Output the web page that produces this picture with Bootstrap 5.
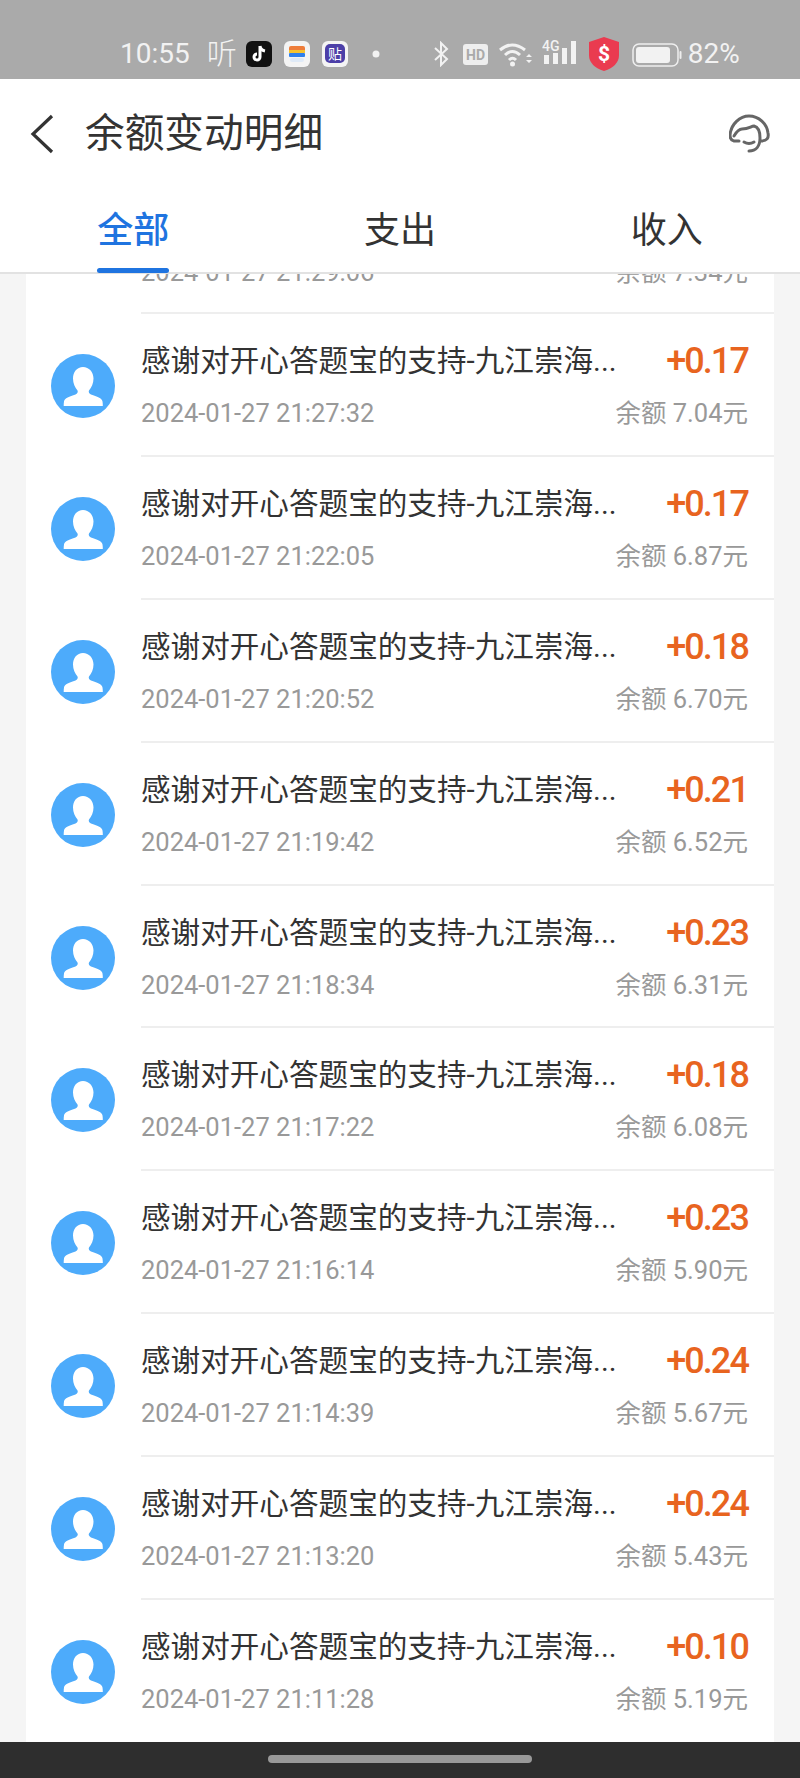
<!DOCTYPE html>
<html>
<head>
    <title>余额变动明细</title>
    <meta charset="UTF-8">
    <link href="https://cdn.jsdelivr.net/npm/bootstrap@5.3.0/dist/css/bootstrap.min.css" rel="stylesheet">
    <style>
        body { background: #f5f5f5; overflow: hidden; font-family: Roboto, "Noto Sans CJK SC", sans-serif; color: #333; }
        .status-bar { height: 79px; background: #aaa; color: #f2f2f2; padding: 24px 0 0 120px; font-size: 28px; line-height: 60px; }
        .status-bar svg { display: block; flex: none; }
        .st-listen { width: 27px; margin-left: 17px; font-size: 30px; font-weight: 200; letter-spacing: -3px; white-space: nowrap; }
        .top-head { height: 195px; background: #fff; border-bottom: 2px solid #e2e2e2; position: relative; z-index: 2; }
        .title-row { height: 109px; padding: 0 29px 0 30px; }
        .page-title { font-size: 39.700px; margin-left: 31px; line-height: 1; font-weight: 400; color: #333; }
        .tab-item { font-size: 36px; line-height: 1; padding-top: 25px; height: 84px; color: #333; text-align: center; position: relative; }
        .tab-item.on { color: #1f74e0; font-weight: 500; }
        .tab-item.on::after { content: ""; position: absolute; left: 50%; margin-left: -36px; bottom: -1px; width: 72px; height: 5px; border-radius: 3px; background: #1f74e0; }
        .bill-list { flex: 1; margin: 0 26px; background: #fff; overflow: hidden; }
        .bill-row { height: 142.9px; display: flex; }
        .bill-row.part { height: 38px; justify-content: flex-end; flex-direction: column; margin-left: 115px; }
        .part .bill-sub { margin: 0 26px 22px 0; height: 36px; flex: none; }
        .avatar-slot { width: 115px; flex: none; padding: 42px 0 0 25px; }
        .bill-body { flex: 1; min-width: 0; border-top: 2px solid #eee; padding: 27px 26px 0 0; }
        .bill-main { display: flex; justify-content: space-between; height: 40px; align-items: center; }
        .bill-name { font-size: 29.600px; line-height: 40px; color: #333; width: 476px; white-space: nowrap; overflow: hidden; }
        .bill-money { font-size: 36px; font-weight: 500; letter-spacing: -1.9px; color: #e8641f; line-height: 40px; }
        .bill-sub { display: flex; justify-content: space-between; margin-top: 14px; font-size: 25.5px; line-height: 36px; color: #999; }
        .bottom-nav { height: 36px; background: #2e2e2e; padding-top: 13px; }
        .nav-handle { width: 264px; height: 8px; border-radius: 4px; background: #999; margin: 0 auto; }
    </style>
</head>
<body class="d-flex flex-column vh-100">
    <!-- status bar -->
    <div class="status-bar d-flex align-items-start">
        <span>10:55</span>
        <span class="st-listen">听</span>
        <svg style="margin:17px 0 0 12px" width="26" height="26" viewBox="0 0 26 26"><rect width="26" height="26" rx="6" fill="#111"/><path d="M14 5v11a3 3 0 1 1-3-3M14 5c.5 3 2.500 4.500 5 5" fill="none" stroke="#fff" stroke-width="3"/></svg>
        <svg style="margin:17px 0 0 12px" width="26" height="26" viewBox="0 0 26 26"><rect width="26" height="26" rx="6" fill="#f4f4f4"/><path d="M5 7q0-2 2-2h12q2 0 2 2v2H5z" fill="#ee7d3a"/><rect x="5" y="9" width="16" height="3" fill="#f7c32e"/><rect x="5" y="12" width="16" height="4" rx="1" fill="#2f80ed"/><rect x="6" y="17" width="14" height="4" rx="2" fill="#dfeaf7"/></svg>
        <svg style="margin:17px 0 0 12px" width="26" height="26" viewBox="0 0 26 26"><rect width="26" height="26" rx="6" fill="#f4f4f4"/><rect x="3" y="3" width="20" height="19" rx="5" fill="#4c3fa8"/><text x="13" y="18" text-anchor="middle" font-size="14" fill="#fff" font-family="Noto Sans CJK SC">贴</text></svg>
        <svg style="margin:26px 0 0 24px" width="8" height="8"><circle cx="4" cy="4" r="3.500" fill="#f2f2f2"/></svg>
        <svg style="margin:17px 0 0 53px" width="16" height="26" viewBox="0 0 16 26"><path d="M2 7l12 11-6 6V2l6 6L2 19" fill="none" stroke="#f2f2f2" stroke-width="2"/></svg>
        <svg style="margin:20px 0 0 14px" width="25" height="21" viewBox="0 0 25 21"><rect width="25" height="21" rx="3" fill="#eee"/><text x="12.500" y="16" text-anchor="middle" font-size="14" font-weight="700" fill="#aaa" font-family="Roboto">HD</text></svg>
        <svg style="margin:18px 0 0 11px" width="33" height="25" viewBox="0 0 33 25"><g fill="none" stroke="#f2f2f2" stroke-width="3"><path d="M1 8q12-10 25 0"/><path d="M6 13q7.500-7 15 0"/><path d="M10 18q3.500-3.500 7 0"/></g><circle cx="13.500" cy="22" r="2.500" fill="#f2f2f2"/><path d="M27 15l3-3 3 3zM27 18h6l-3 3z" fill="#f2f2f2"/></svg>
        <svg style="margin:15px 0 0 10px" width="35" height="26" viewBox="0 0 35 26"><g fill="#f2f2f2"><rect x="2" y="16" width="5" height="9"/><rect x="11" y="14" width="5" height="11"/><rect x="20" y="9" width="5" height="16"/><rect x="29" y="2" width="5" height="23"/></g><text x="0" y="12" font-size="14" fill="#f2f2f2" font-family="Roboto" font-weight="500">4G</text></svg>
        <svg style="margin:12px 0 0 11px" width="32" height="36" viewBox="0 0 32 36"><path d="M16 1l15 5v13q0 11-15 16Q1 30 1 19V6z" fill="#ea3b50"/><text x="16" y="25" text-anchor="middle" font-size="21" font-weight="700" fill="#fff" font-family="Roboto">$</text></svg>
        <svg style="margin:19px 0 0 12px" width="50" height="24" viewBox="0 0 50 24"><rect x="1" y="1" width="45" height="22" rx="6" fill="none" stroke="#eee" stroke-width="1.500"/><rect x="4" y="4" width="34" height="16" rx="3" fill="#f2f2f2"/><rect x="47.500" y="8" width="2" height="8" rx="1" fill="#eee"/></svg>
        <span style="margin-left:6px">82%</span>
    </div>

    <!-- header -->
    <div class="top-head">
        <div class="title-row d-flex align-items-center">
            <svg width="24" height="40" viewBox="0 0 24 40"><path d="M22 2L3 20l19 18" fill="none" stroke="#333" stroke-width="3.200"/></svg>
            <h1 class="page-title mb-0">余额变动明细</h1>
            <svg class="ms-auto" width="42" height="40" viewBox="0 0 42 40"><g fill="none" stroke="#666" stroke-width="3" stroke-linecap="round"><path d="M10 27H5Q1 26 1 21C2 10 11 2 20 2c10 0 18 8 19 17 1 5-1 8-7 8"/><path d="M5 22c3-5 5-7 8-7 7 0 9-3 12-3 4 1 6 6 6 12 0 8-4 13-11 13"/><path d="M15 28q5 3 10 0"/></g></svg>
        </div>
        <div class="row g-0">
            <div class="col-4 tab-item on">全部</div>
            <div class="col-4 tab-item">支出</div>
            <div class="col-4 tab-item">收入</div>
        </div>
    </div>

    <!-- list -->
    <div class="bill-list" id="billList"></div>

    <div class="bottom-nav"><div class="nav-handle"></div></div>

    <script src="https://cdn.jsdelivr.net/npm/bootstrap@5.3.0/dist/js/bootstrap.bundle.min.js"></script>
    <script>
        const rows = [
            ['+0.17', '21:27:32', '7.04'], ['+0.17', '21:22:05', '6.87'], ['+0.18', '21:20:52', '6.70'],
            ['+0.21', '21:19:42', '6.52'], ['+0.23', '21:18:34', '6.31'], ['+0.18', '21:17:22', '6.08'],
            ['+0.23', '21:16:14', '5.90'], ['+0.24', '21:14:39', '5.67'], ['+0.24', '21:13:20', '5.43'],
            ['+0.10', '21:11:28', '5.19']
        ];
        const avatar = `<svg width="64" height="64" viewBox="0 0 64 64"><circle cx="32" cy="32" r="32" fill="#4dabfb"/><path d="M32 13c6 0 10.500 5 10.500 11.500 0 5-2 9-4.500 12-.8 1.500.2 3 2 4 6 2 11 3.500 11.500 7 .3 1.500.3 3 .3 4.500H12.700c0-1.500 0-3 .3-4.500.5-3.500 5.500-5 11.500-7 1.800-1 2.800-2.500 2-4-2.500-3-4.500-7-4.500-12C22 18 26 13 32 13z" fill="#fff"/></svg>`;
        let html = `<div class="bill-row part"><div class="bill-sub"><span>2024-01-27 21:29:06</span><span>余额 7.34元</span></div></div>`;
        rows.forEach(r => {
            html += `<div class="bill-row">
                <div class="avatar-slot">${avatar}</div>
                <div class="bill-body">
                    <div class="bill-main"><span class="bill-name">感谢对开心答题宝的支持-九江崇海...</span><span class="bill-money">${r[0]}</span></div>
                    <div class="bill-sub"><span>2024-01-27 ${r[1]}</span><span>余额 ${r[2]}元</span></div>
                </div>
            </div>`;
        });
        document.getElementById('billList').innerHTML = html;
    </script>
</body>
</html>
